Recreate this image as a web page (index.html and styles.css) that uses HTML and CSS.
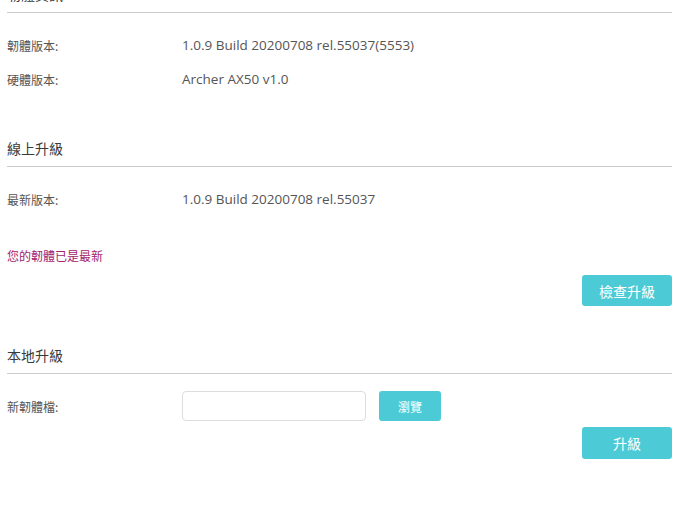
FILE: index.html
```html
<!DOCTYPE html>
<html lang="zh-Hant">
<head>
  <meta charset="UTF-8" />
  <meta name="viewport" content="width=device-width, initial-scale=1.0"/>
  <title>韌體升級</title>
  <link rel="stylesheet" href="styles.css">
</head>
<body>

  <main class="page">
    <section class="block block-first">
      <h3 class="block-title">韌體資訊</h3>
      <div class="rows">
        <div class="row">
          <span class="label">韌體版本:</span>
          <span class="value">1.0.9 Build 20200708 rel.55037(5553)</span>
        </div>
        <div class="row">
          <span class="label">硬體版本:</span>
          <span class="value">Archer AX50 v1.0</span>
        </div>
      </div>
    </section>

    <section class="block block-online">
      <h3 class="block-title">線上升級</h3>
      <div class="rows">
        <div class="row">
          <span class="label">最新版本:</span>
          <span class="value">1.0.9 Build 20200708 rel.55037</span>
        </div>
      </div>
      <p class="notice">您的韌體已是最新</p>
      <div class="actions">
        <button class="btn btn-wide">檢查升級</button>
      </div>
    </section>

    <section class="block block-local">
      <h3 class="block-title">本地升級</h3>
      <div class="rows rows-file">
        <div class="row">
          <span class="label">新韌體檔:</span>
          <input type="text" class="file-input" />
          <button class="btn btn-small">瀏覽</button>
        </div>
      </div>
      <div class="actions actions-tight">
        <button class="btn btn-wide btn-tall">升級</button>
      </div>
    </section>
  </main>

</body>
</html>
```

FILE: styles.css
```css
body {
  margin: 0;
  background: #fff;
  font-family: "Noto Sans CJK TC", sans-serif;
  color: #555;
  overflow: hidden;
}

.page {
  padding: 0 22px 0 7px;
}

.block-title {
  margin: 0;
  font-size: 14px;
  font-weight: normal;
  line-height: 20px;
  padding-bottom: 8px;
  color: #3a3a3a;
  border-bottom: 1px solid #ccc;
}

.block-first {
  margin-top: -16px;
}

.block-online {
  margin-top: 42px;
}

.block-local {
  margin-top: 39px;
}

.rows {
  padding-top: 15px;
}

.rows-file {
  padding-top: 17px;
}

.row {
  display: flex;
  align-items: center;
  height: 34px;
}

.rows-file .row {
  height: 30px;
}

.label {
  width: 175px;
  flex-shrink: 0;
  font-size: 12px;
  color: #555;
}

.value {
  font-family: "Open Sans", "Noto Sans CJK TC", sans-serif;
  font-size: 13.5px;
  color: #555;
}

.notice {
  margin: 30px 0 0;
  font-size: 12px;
  line-height: 20px;
  color: #a4236e;
}

.actions {
  display: flex;
  justify-content: flex-end;
  margin-top: 9px;
}

.actions-tight {
  margin-top: 6px;
}

.file-input {
  width: 184px;
  height: 30px;
  box-sizing: border-box;
  border: 1px solid #ddd;
  border-radius: 4px;
  margin: 0;
  padding: 0 8px;
}

.btn {
  font-family: "Noto Sans CJK TC", sans-serif;
  background-color: #4ccbd6;
  color: white;
  border: none;
  border-radius: 3px;
  cursor: pointer;
  padding: 0;
}

.btn:hover {
  background-color: #3fbcc7;
}

.btn-wide {
  width: 90px;
  height: 31px;
  font-size: 14px;
}

.btn-tall {
  height: 32px;
}

.btn-small {
  width: 62px;
  height: 30px;
  margin-left: 13px;
  font-size: 12px;
}
```
